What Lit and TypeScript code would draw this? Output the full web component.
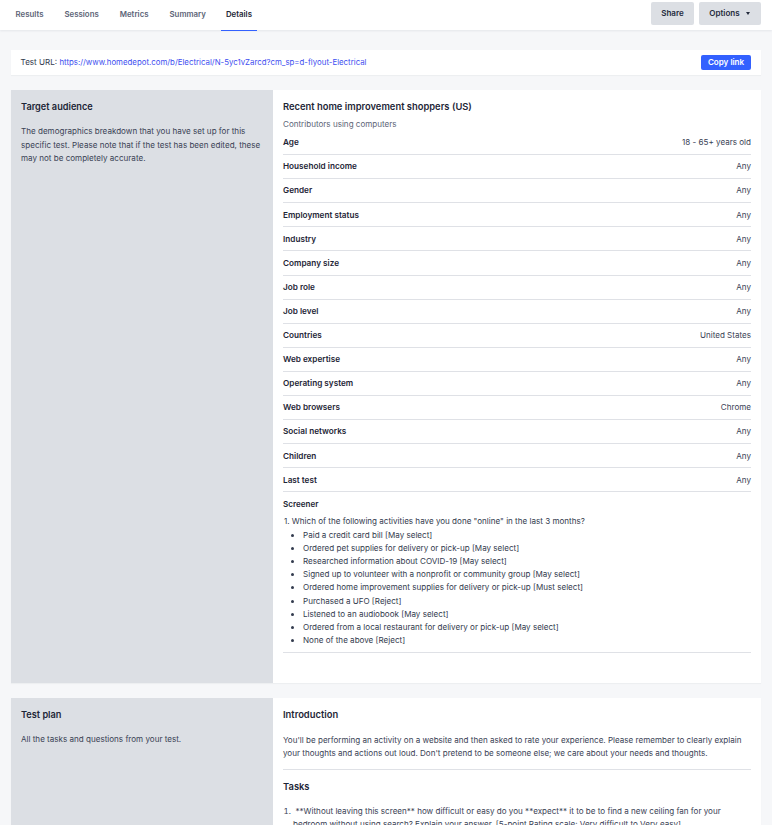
import { LitElement, html, css } from "lit";
import { customElement } from "lit/decorators.js";

const rows: [string, string][] = [
  ["Age", "18 - 65+ years old"],
  ["Household income", "Any"],
  ["Gender", "Any"],
  ["Employment status", "Any"],
  ["Industry", "Any"],
  ["Company size", "Any"],
  ["Job role", "Any"],
  ["Job level", "Any"],
  ["Countries", "United States"],
  ["Web expertise", "Any"],
  ["Operating system", "Any"],
  ["Web browsers", "Chrome"],
  ["Social networks", "Any"],
  ["Children", "Any"],
  ["Last test", "Any"],
];
const answers = [
  "Paid a credit card bill [May select]",
  "Ordered pet supplies for delivery or pick-up [May select]",
  "Researched information about COVID-19 [May select]",
  "Signed up to volunteer with a nonprofit or community group [May select]",
  "Ordered home improvement supplies for delivery or pick-up [Must select]",
  "Purchased a UFO [Reject]",
  "Listened to an audiobook [May select]",
  "Ordered from a local restaurant for delivery or pick-up [May select]",
  "None of the above [Reject]",
];

@customElement("app-root")
export class AppRoot extends LitElement {
  static styles = css`
    :host {
      display: block;
      height: 825px;
      overflow: hidden;
      background: #f6f7f9;
      font-family: Inter, "Liberation Sans", sans-serif;
      font-size: 8.07px;
      line-height: 13px;
      color: #333b4e;
    }
    .top {
      height: 30px;
      background: #fff;
      box-shadow: 0 1px 2px rgba(30, 40, 60, 0.08);
      display: flex;
      justify-content: space-between;
      padding: 0 11px 0 5px;
      box-sizing: border-box;
    }
    .tabs { display: flex; }
    .tab {
      padding: 0 5px 3px;
      margin: 0 5.5px;
      height: 31px;
      box-sizing: border-box;
      display: flex;
      align-items: center;
      font-weight: 600;
      font-size: 7.85px;
      color: #5d6577;
    }
    .tab.on { color: #1d2536; border-bottom: 1px solid #3361ff; padding: 0 5px 2px 4.5px; margin-left: 5px; }
    .btns { display: flex; gap: 5px; padding-top: 2px; }
    .btn {
      height: 23px;
      width: 43px;
      border-radius: 2px;
      background: #dcdfe4;
      color: #252c3e;
      font-weight: 600;
      display: flex;
      align-items: center;
      justify-content: center;
    }
    .btn .caret {
      margin-left: 6px;
      width: 0;
      height: 0;
      border-left: 2px solid transparent;
      border-right: 2px solid transparent;
      border-top: 3px solid #252c3e;
    }
    .btn.opt { width: 62px; padding: 0 1px 1px 0; box-sizing: border-box; }
    main { padding: 20px 11px 0; display: flex; flex-direction: column; }
    .url {
      height: 25px;
      background: #fff;
      display: flex;
      align-items: center;
      justify-content: space-between;
      padding: 0 10px 0 9.6px;
      margin-bottom: 15px;
      box-shadow: 0 1px 1px rgba(30, 40, 60, 0.04);
    }
    .url a { color: #3d4ef0; text-decoration: none; font-size: 7.85px; }
    .copy {
      background: #3361ff;
      color: #fff;
      font-weight: 600;
      height: 15px;
      width: 50px;
      border-radius: 2px;
      display: flex;
      align-items: center;
      justify-content: center;
    }
    .panel {
      display: flex;
      background: #fff;
      margin-bottom: 15px;
      box-shadow: 0 1px 1px rgba(30, 40, 60, 0.04);
    }
    .side {
      width: 262px;
      flex: none;
      background: #dcdfe4;
      padding: 10px 10px;
      box-sizing: border-box;
    }
    .side p { margin: 11px 0 0; line-height: 13.5px; color: #3a4255; }
    .h { font-weight: 600; color: #1d2536; font-size: 9.4px; line-height: 14px; }
    .side .h { font-size: 9.2px; }
    .body { flex: 1; padding: 10px 10px 30px; min-width: 0; }
    .sub { margin-top: 4px; color: #5d6577; line-height: 13px; }
    .row {
      display: flex;
      justify-content: space-between;
      height: 24.1px;
      box-sizing: border-box;
      border-bottom: 1px solid #dfe1e6;
      padding-top: 5.3px;
      color: #3a4255;
    }
    .row b { font-weight: 600; color: #1d2536; font-size: 8.2px; }
    .scr { font-weight: 600; color: #1d2536; margin-top: 6px; }
    .q { margin-top: 4px; padding-left: 1px; }
    ul { margin: 0.7px 0 0; padding: 0 0 0 20px; }
    li { line-height: 13.1px; }
    .end { border-bottom: 1px solid #dfe1e6; padding-bottom: 5.3px; }
    .panel2 { margin-bottom: 0; min-height: 400px; }
    .panel2 .body { padding-bottom: 0; }
    .intro { margin: 12px 0 0; line-height: 13.2px; padding-bottom: 8px; border-bottom: 1px solid #dfe1e6; color: #3a4255; }
    .tasks { margin-top: 10px; }
    ol { margin: 11px 0 0; padding: 0 0 0 10px; color: #3a4255; }
    ol li { line-height: 13.3px; text-indent: 2.5px; }
  `;

  render() {
    return html`
      <div class="top">
        <div class="tabs">
          <div class="tab">Results</div>
          <div class="tab">Sessions</div>
          <div class="tab">Metrics</div>
          <div class="tab">Summary</div>
          <div class="tab on">Details</div>
        </div>
        <div class="btns">
          <div class="btn">Share</div>
          <div class="btn opt">Options<span class="caret"></span></div>
        </div>
      </div>
      <main>
        <div class="url">
          <div>Test URL: <a>https://www.homedepot.com/b/Electrical/N-5yc1vZarcd?cm_sp=d-flyout-Electrical</a></div>
          <div class="copy">Copy link</div>
        </div>
        <section class="panel">
          <div class="side">
            <div class="h">Target audience</div>
            <p>The demographics breakdown that you have set up for this specific test. Please note that if the test has been edited, these may not be completely accurate.</p>
          </div>
          <div class="body">
            <div class="h">Recent home improvement shoppers (US)</div>
            <div class="sub">Contributors using computers</div>
            ${rows.map(([k, v]) => html`<div class="row"><b>${k}</b><span>${v}</span></div>`)}
            <div class="scr">Screener</div>
            <div class="end">
              <div class="q">1. Which of the following activities have you done "online" in the last 3 months?</div>
              <ul>${answers.map((a) => html`<li>${a}</li>`)}</ul>
            </div>
          </div>
        </section>
        <section class="panel panel2">
          <div class="side">
            <div class="h">Test plan</div>
            <p>All the tasks and questions from your test.</p>
          </div>
          <div class="body">
            <div class="h">Introduction</div>
            <p class="intro">You'll be performing an activity on a website and then asked to rate your experience. Please remember to clearly explain your thoughts and actions out loud. Don't pretend to be someone else; we care about your needs and thoughts.</p>
            <div class="h tasks">Tasks</div>
            <ol>
              <li>**Without leaving this screen** how difficult or easy do you **expect** it to be to find a new ceiling fan for your bedroom without using search? Explain your answer. [5-point Rating scale: Very difficult to Very easy]</li>
            </ol>
          </div>
        </section>
      </main>
    `;
  }
}
